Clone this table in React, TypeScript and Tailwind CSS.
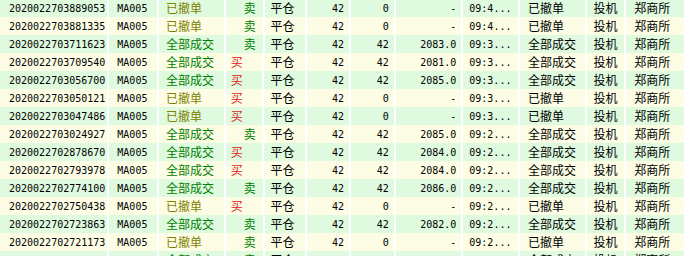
const rows: string[][] = [
  ["2020022703889053", "已撤单", "卖", "42", "0", "-", "09:4...", "已撤单"],
  ["2020022703881335", "已撤单", "卖", "42", "0", "-", "09:4...", "已撤单"],
  ["2020022703711623", "全部成交", "卖", "42", "42", "2083.0", "09:3...", "全部成交"],
  ["2020022703709540", "全部成交", "买", "42", "42", "2081.0", "09:3...", "全部成交"],
  ["2020022703056700", "全部成交", "买", "42", "42", "2085.0", "09:3...", "全部成交"],
  ["2020022703050121", "已撤单", "买", "42", "0", "-", "09:3...", "已撤单"],
  ["2020022703047486", "已撤单", "买", "42", "0", "-", "09:3...", "已撤单"],
  ["2020022703024927", "全部成交", "卖", "42", "42", "2085.0", "09:2...", "全部成交"],
  ["2020022702878670", "全部成交", "买", "42", "42", "2084.0", "09:2...", "全部成交"],
  ["2020022702793978", "全部成交", "买", "42", "42", "2084.0", "09:2...", "全部成交"],
  ["2020022702774100", "全部成交", "卖", "42", "42", "2086.0", "09:2...", "全部成交"],
  ["2020022702750438", "已撤单", "买", "42", "0", "-", "09:2...", "已撤单"],
  ["2020022702723863", "全部成交", "卖", "42", "42", "2082.0", "09:2...", "全部成交"],
  ["2020022702721173", "已撤单", "卖", "42", "0", "-", "09:2...", "已撤单"],
  ["2020022702698812", "全部成交", "卖", "42", "42", "2083.0", "09:2...", "全部成交"],
];

const mono = "font-['DejaVu_Sans_Mono','Liberation_Mono',monospace] text-[10px]";
const cjk = "font-['Noto_Sans_CJK_SC',sans-serif] text-[12px]";
const cell = "h-full flex items-center border-r-2 border-white overflow-hidden whitespace-nowrap";

const Row = ({ r, i }: { r: string[]; i: number }) => {
  const bg = i % 2 === 0 ? "bg-[#dffadf]" : "bg-[#fdfde5]";
  const done = r[1] === "全部成交";
  const buy = r[2] === "买";
  return (
    <div className={`flex h-[18px] ${bg} text-black`}>
      <div className={`${cell} w-[110px] pl-[9px] ${mono}`}>{r[0]}</div>
      <div className={`${cell} w-[50px] pl-[8px] ${mono}`}>MA005</div>
      <div className={`${cell} w-[67px] pl-[7px] ${cjk} ${done ? "text-[#008000]" : "text-[#808000]"}`}>{r[1]}</div>
      <div className={`${cell} w-[39px] ${buy ? "pl-[5px] text-[#e02020]" : "pl-[18px] text-[#008000]"} ${cjk}`}>{r[2]}</div>
      <div className={`${cell} w-[43px] pl-[6px] ${cjk}`}>平仓</div>
      <div className={`${cell} w-[44px] justify-end pr-[5px] ${mono}`}>{r[3]}</div>
      <div className={`${cell} w-[45px] justify-end pr-[5px] ${mono}`}>{r[4]}</div>
      <div className={`${cell} w-[68px] justify-end pr-[5px] ${mono}`}>{r[5]}</div>
      <div className={`${cell} w-[57px] pl-[6px] ${mono}`}>{r[6]}</div>
      <div className={`${cell} w-[67px] pl-[8px] ${cjk}`}>{r[7]}</div>
      <div className={`${cell} w-[40px] pl-[7px] ${cjk}`}>投机</div>
      <div className={`${cell} w-[60px] pl-[8px] ${cjk}`}>郑商所</div>
    </div>
  );
};

export default function App() {
  return (
    <div className="w-[686px] h-[256px] overflow-hidden bg-white">
      <div className="-mt-px">
        {rows.map((r, i) => (
          <Row key={i} r={r} i={i} />
        ))}
      </div>
    </div>
  );
}
